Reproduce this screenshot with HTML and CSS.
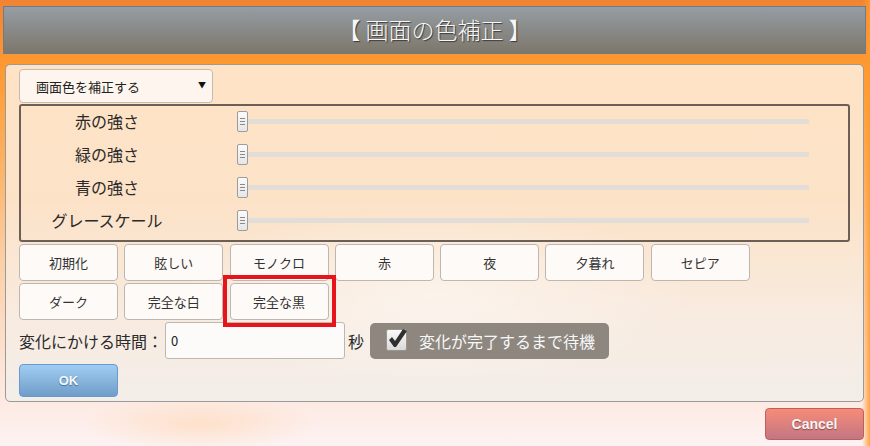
FILE: index.html
```html
<!DOCTYPE html>
<html lang="ja">
<head>
    <meta charset="UTF-8">
    <meta name="viewport" content="width=device-width, initial-scale=1.0">
    <title>画面の色補正</title>
    <link rel="stylesheet" href="styles.css">
</head>
<body>
    <div class="titlebar">【 画面の色補正 】</div>

    <div class="panel">
        <div class="select">
            <span>画面色を補正する</span>
            <span class="arrow">▼</span>
        </div>

        <div class="sliders">
            <div class="slider-row">
                <div class="slider-label">赤の強さ</div>
                <div class="slider"><div class="track"></div><span class="handle"><i></i><i></i><i></i></span></div>
            </div>
            <div class="slider-row">
                <div class="slider-label">緑の強さ</div>
                <div class="slider"><div class="track"></div><span class="handle"><i></i><i></i><i></i></span></div>
            </div>
            <div class="slider-row">
                <div class="slider-label">青の強さ</div>
                <div class="slider"><div class="track"></div><span class="handle"><i></i><i></i><i></i></span></div>
            </div>
            <div class="slider-row">
                <div class="slider-label">グレースケール</div>
                <div class="slider"><div class="track"></div><span class="handle"><i></i><i></i><i></i></span></div>
            </div>
        </div>

        <div class="presets">
            <button class="preset">初期化</button>
            <button class="preset">眩しい</button>
            <button class="preset">モノクロ</button>
            <button class="preset">赤</button>
            <button class="preset">夜</button>
            <button class="preset">夕暮れ</button>
            <button class="preset">セピア</button>
            <button class="preset">ダーク</button>
            <button class="preset">完全な白</button>
            <button class="preset selected">完全な黒</button>
        </div>

        <div class="time-row">
            <span class="time-label">変化にかける時間：</span>
            <div class="time-input">0</div>
            <span class="time-unit">秒</span>
            <div class="wait-check">
                <svg class="checkbox" width="22" height="24" viewBox="0 0 22 24">
                    <defs>
                        <linearGradient id="cb" x1="0" y1="0" x2="0" y2="1">
                            <stop offset="0" stop-color="#fafafa"/>
                            <stop offset="1" stop-color="#d9d9d9"/>
                        </linearGradient>
                    </defs>
                    <rect x="0.5" y="2.5" width="20" height="21" rx="2" fill="url(#cb)" stroke="#9a948d"/>
                    <path d="M3 13 L6 10 L9 14 L17 2 L21 4 L10 20 L8 20 Z" fill="#2f2f2f"/>
                </svg>
                <span>変化が完了するまで待機</span>
            </div>
        </div>

        <button class="ok">OK</button>
    </div>

    <div class="footer">
        <button class="cancel">Cancel</button>
    </div>
</body>
</html>
```

FILE: styles.css
```css
* {
    margin: 0;
    padding: 0;
    box-sizing: border-box;
}

body {
    width: 870px;
    height: 446px;
    overflow: hidden;
    padding-top: 6px;
    font-family: "Noto Sans CJK JP", "Noto Sans", sans-serif;
    color: #333;
    background:
        radial-gradient(ellipse 120px 26px at 200px 424px, rgba(253, 214, 176, 0.55), transparent),
        linear-gradient(to left, rgba(255, 154, 48, 0.9) 0, rgba(255, 154, 48, 0) 8px),
        linear-gradient(to bottom, #ef8434 0, #f68e33 30px, #ff9a30 70px, #fdae5a 150px, #fccfa6 260px, #fde6da 380px, #fdf2f3 446px);
}

.titlebar {
    margin: 0 4px 0 3px;
    height: 48px;
    border: 1px solid #6f7b88;
    background: linear-gradient(to bottom, #959da4, #7d776b);
    color: #f6f6f6;
    font-size: 23px;
    font-weight: 300;
    line-height: 45px;
    text-align: center;
    text-shadow: 1px 1px 1px #3a3a3a;
}

.panel {
    margin: 10px 6px 0 5px;
    padding: 4px 13px 4px 13px;
    border: 1px solid #9a9a9a;
    border-radius: 5px;
    background:
        radial-gradient(ellipse 260px 90px at 430px 230px, rgba(255, 255, 255, 0.45), transparent),
        linear-gradient(to bottom, #fee3c6 0, #fce2c7 40%, #f8ebe0 75%, #f3eee9 100%);
}

.select {
    width: 194px;
    height: 34px;
    display: flex;
    align-items: center;
    justify-content: space-between;
    padding: 0 6px 0 16px;
    border: 1px solid #c4bcb3;
    border-radius: 4px;
    background: #fef6ee;
    font-size: 13px;
    color: #222;
}

.select .arrow {
    font-size: 8px;
    color: #111;
    margin-top: -4px;
}

.sliders {
    margin-top: 1px;
    border: 2px solid #6b6057;
    border-radius: 3px;
    padding: 0 0 2px 0;
}

.slider-row {
    height: 33px;
    display: grid;
    grid-template-columns: 172px 1fr;
    column-gap: 44px;
    align-items: start;
    padding: 5px 39px 0 0;
}

.slider-label {
    text-align: center;
    font-size: 16px;
    line-height: 21px;
    color: #2a2a2a;
}

.slider {
    position: relative;
    height: 21px;
    display: flex;
    align-items: center;
}

.track {
    width: 100%;
    height: 5px;
    background: #e2ddd6;
}

.handle {
    position: absolute;
    left: 0;
    top: 0;
    width: 11px;
    height: 21px;
    border: 1px solid #9c9c9c;
    border-radius: 2px;
    background: linear-gradient(to bottom, #fbfbfb, #e6e6e6);
    display: flex;
    flex-direction: column;
    align-items: center;
    justify-content: center;
    gap: 2px;
}

.handle i {
    display: block;
    width: 5px;
    height: 1px;
    background: #8a8a8a;
}

.presets {
    margin-top: 2px;
    display: grid;
    grid-template-columns: repeat(7, 99px);
    column-gap: 6.3px;
    row-gap: 2px;
}

.preset {
    height: 37px;
    border: 1px solid #bdb7b0;
    border-radius: 4px;
    background: #fdfaf7;
    font-family: inherit;
    font-size: 13px;
    color: #333;
}

.preset.selected {
    position: relative;
}

.preset.selected::after {
    content: "";
    position: absolute;
    top: -9px;
    left: -8px;
    right: -8px;
    bottom: -8px;
    border: 4px solid #e8141c;
}

.time-row {
    margin-top: 2px;
    display: flex;
    align-items: center;
    height: 37px;
}

.time-label {
    font-size: 16px;
    color: #2a2a2a;
    width: 146px;
}

.time-input {
    width: 180px;
    height: 37px;
    border: 1px solid #bdb7b0;
    border-radius: 3px;
    background: #fdfbf9;
    padding-left: 5px;
    font-size: 13px;
    line-height: 35px;
    color: #222;
}

.time-unit {
    font-size: 16px;
    color: #2a2a2a;
    margin-left: 3px;
}

.wait-check {
    margin-left: 6px;
    width: 239px;
    height: 36px;
    display: flex;
    align-items: center;
    padding-left: 16px;
    border-radius: 5px;
    background: #8e8780;
    color: #f7f7f7;
    font-size: 16px;
}

.checkbox {
    margin-right: 11px;
    margin-top: -3px;
}

.ok {
    margin-top: 5px;
    width: 99px;
    height: 33px;
    border: 1px solid #6a9acd;
    border-radius: 4px;
    background: linear-gradient(to bottom, #9fcdf2, #6f9dc8);
    font-family: "Liberation Sans", sans-serif;
    font-weight: bold;
    font-size: 13px;
    color: #f4f8fb;
    text-shadow: 0 1px 1px #4b6f94;
    display: block;
}

.footer {
    display: flex;
    justify-content: flex-end;
    padding-right: 6px;
    margin-top: 6px;
}

.cancel {
    width: 99px;
    height: 32px;
    border: 1px solid #bf5e5e;
    border-radius: 4px;
    background: linear-gradient(to bottom, #f78b77, #c27683);
    font-family: "Liberation Sans", sans-serif;
    font-weight: bold;
    font-size: 14px;
    color: #fbf3f3;
    text-shadow: 0 1px 1px #8a4a4a;
}
```
